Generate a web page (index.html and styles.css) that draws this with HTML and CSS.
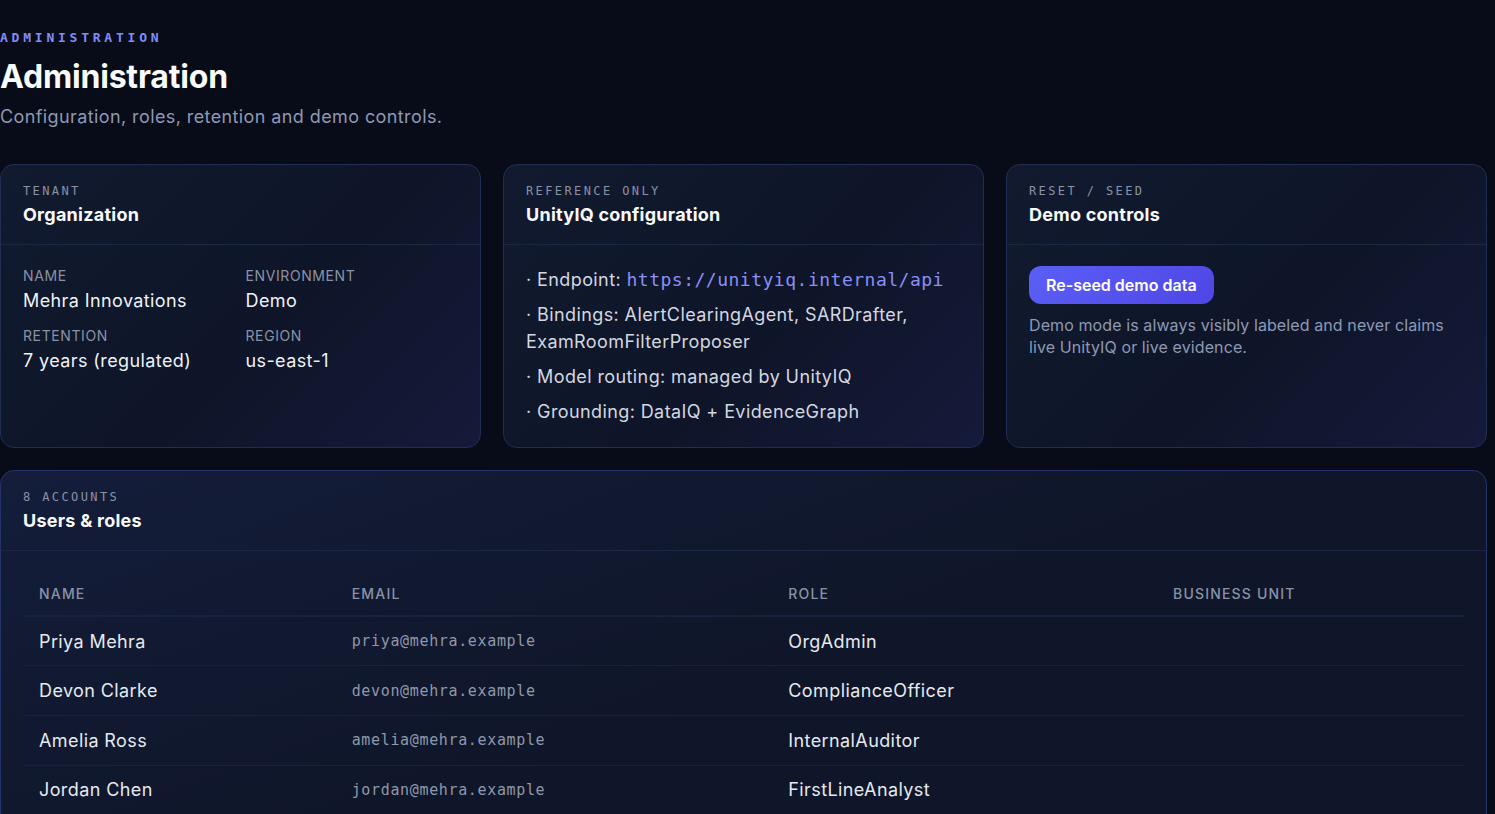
FILE: index.html
```html
<!DOCTYPE html>
<html lang="en">
<head>
<meta charset="utf-8">
<title>Administration</title>
<link rel="stylesheet" href="styles.css">
</head>
<body>
<main class="page">
  <header class="page-head">
    <div class="eyebrow">Administration</div>
    <h1 class="page-title">Administration</h1>
    <p class="page-sub">Configuration, roles, retention and demo controls.</p>
  </header>

  <section class="cards">
    <article class="card">
      <div class="card-head">
        <div class="card-eyebrow">Tenant</div>
        <h2 class="card-title">Organization</h2>
      </div>
      <div class="card-body">
        <dl class="facts">
          <div class="fact"><dt>Name</dt><dd>Mehra Innovations</dd></div>
          <div class="fact"><dt>Environment</dt><dd>Demo</dd></div>
          <div class="fact"><dt>Retention</dt><dd>7 years (regulated)</dd></div>
          <div class="fact"><dt>Region</dt><dd>us-east-1</dd></div>
        </dl>
      </div>
    </article>

    <article class="card">
      <div class="card-head">
        <div class="card-eyebrow">Reference only</div>
        <h2 class="card-title">UnityIQ configuration</h2>
      </div>
      <div class="card-body">
        <ul class="config">
          <li>· Endpoint: <code class="endpoint">https://unityiq.internal/api</code></li>
          <li>· Bindings: AlertClearingAgent, SARDrafter, ExamRoomFilterProposer</li>
          <li>· Model routing: managed by UnityIQ</li>
          <li>· Grounding: DataIQ + EvidenceGraph</li>
        </ul>
      </div>
    </article>

    <article class="card">
      <div class="card-head">
        <div class="card-eyebrow">Reset / Seed</div>
        <h2 class="card-title">Demo controls</h2>
      </div>
      <div class="card-body">
        <button class="btn-primary" type="button">Re-seed demo data</button>
        <p class="note">Demo mode is always visibly labeled and never claims live UnityIQ or live evidence.</p>
      </div>
    </article>
  </section>

  <section class="card card-wide">
    <div class="card-head">
      <div class="card-eyebrow">8 accounts</div>
      <h2 class="card-title">Users &amp; roles</h2>
    </div>
    <div class="card-body table-body">
      <table class="users">
        <colgroup>
          <col class="c-name"><col class="c-email"><col class="c-role"><col class="c-unit">
        </colgroup>
        <thead>
          <tr><th>Name</th><th>Email</th><th>Role</th><th>Business unit</th></tr>
        </thead>
        <tbody>
          <tr><td>Priya Mehra</td><td class="mono">priya@mehra.example</td><td>OrgAdmin</td><td></td></tr>
          <tr><td>Devon Clarke</td><td class="mono">devon@mehra.example</td><td>ComplianceOfficer</td><td></td></tr>
          <tr><td>Amelia Ross</td><td class="mono">amelia@mehra.example</td><td>InternalAuditor</td><td></td></tr>
          <tr><td>Jordan Chen</td><td class="mono">jordan@mehra.example</td><td>FirstLineAnalyst</td><td></td></tr>
          <tr><td>Samir Patel</td><td class="mono">samir@mehra.example</td><td>FirstLineAnalyst</td><td></td></tr>
          <tr><td>Lena Okafor</td><td class="mono">lena@mehra.example</td><td>SecondLineReviewer</td><td></td></tr>
          <tr><td>Marcus Hale</td><td class="mono">marcus@mehra.example</td><td>ModelRiskManager</td><td></td></tr>
          <tr><td>Nora Lindqvist</td><td class="mono">nora@mehra.example</td><td>Examiner</td><td></td></tr>
        </tbody>
      </table>
    </div>
  </section>
</main>
</body>
</html>
```

FILE: styles.css
```css
* { box-sizing: border-box; }

html, body {
  margin: 0;
  padding: 0;
  background: #080c18;
  color: #f1f5f9;
  font-family: "Inter", "Noto Sans", "Liberation Sans", sans-serif;
  letter-spacing: 0.025em;
}

.page {
  width: 1487px;
  padding: 29px 0 40px 0;
  display: flex;
  flex-direction: column;
  gap: 22px;
}

.page-head {
  display: flex;
  flex-direction: column;
  margin-bottom: 12px;
}

.eyebrow {
  font-family: "DejaVu Sans Mono", "Liberation Mono", monospace;
  font-size: 13px;
  line-height: 18px;
  letter-spacing: 0.29em;
  text-transform: uppercase;
  color: #818cf8;
  font-weight: 600;
}

.page-title {
  margin: 8px 0 0 0;
  font-size: 32px;
  line-height: 44px;
  font-weight: 700;
  letter-spacing: -0.006em;
  color: #f8fafc;
}

.page-sub {
  margin: 5px 0 0 0;
  font-size: 18px;
  line-height: 26px;
  color: #8e99b4;
}

.cards {
  display: grid;
  grid-template-columns: 1fr 1fr 1fr;
  gap: 22px;
}

.card {
  border: 1px solid #222d52;
  border-radius: 14px;
  background: linear-gradient(135deg, #111a2f 0%, #0e1528 55%, #151a3a 100%);
  min-height: 284px;
  display: flex;
  flex-direction: column;
}

.card-head {
  padding: 18px 22px 17px 22px;
  border-bottom: 1px solid #1b2644;
}

.card-eyebrow {
  font-family: "DejaVu Sans Mono", "Liberation Mono", monospace;
  font-size: 12px;
  line-height: 16px;
  letter-spacing: 0.2em;
  text-transform: uppercase;
  color: #8a92a6;
}

.card-title {
  margin: 4px 0 0 0;
  font-size: 18px;
  line-height: 24px;
  font-weight: 700;
  letter-spacing: 0.014em;
  color: #f8fafc;
}

.card-body {
  padding: 21px 22px 22px 22px;
}

.facts {
  margin: 0;
  display: grid;
  grid-template-columns: 1fr 1fr;
  column-gap: 10px;
  row-gap: 12px;
}

.fact dt {
  font-size: 14px;
  line-height: 20px;
  letter-spacing: 0.043em;
  text-transform: uppercase;
  color: #8a92a6;
}

.fact dd {
  margin: 2px 0 0 0;
  font-size: 18px;
  line-height: 26px;
  color: #eef2f7;
}

.config {
  list-style: none;
  margin: 0;
  padding: 0;
  display: flex;
  flex-direction: column;
  gap: 8px;
  font-size: 18px;
  line-height: 27px;
  color: #d3d7e0;
}

.endpoint {
  font-family: "DejaVu Sans Mono", "Liberation Mono", monospace;
  font-size: 18px;
  letter-spacing: 0.5px;
  color: #8b8ff7;
}

.btn-primary {
  font-family: inherit;
  font-size: 16px;
  font-weight: 600;
  letter-spacing: 0;
  color: #ffffff;
  background: linear-gradient(135deg, #5b5ff6 0%, #4f46e5 100%);
  border: none;
  border-radius: 12px;
  height: 38px;
  padding: 0 17px;
  cursor: pointer;
}

.note {
  margin: 10px 0 0 0;
  font-size: 16px;
  line-height: 22px;
  letter-spacing: 0.1px;
  color: #8e99b4;
}

.card-wide {
  min-height: 0;
  background: linear-gradient(160deg, #141d3a 0%, #0f1629 45%, #0f1629 100%);
  border-color: #26336a;
}

.table-body {
  padding: 22px 22px 0 22px;
}

.users {
  width: 100%;
  border-collapse: collapse;
  table-layout: fixed;
}

.c-name { width: 21.7%; }
.c-email { width: 30.3%; }
.c-role { width: 26.7%; }
.c-unit { width: 21.3%; }

.users th {
  text-align: left;
  font-size: 14px;
  font-weight: 500;
  letter-spacing: 0.085em;
  text-transform: uppercase;
  color: #8a92a6;
  padding: 11px 16px 11px 16px;
  line-height: 20px;
  border-bottom: 2px solid #18213d;
}

.users td {
  padding: 0 16px;
  height: 49.7px;
  font-size: 18px;
  color: #e5e9f0;
  border-bottom: 1px solid #18213d;
}

.users td.mono {
  font-family: "DejaVu Sans Mono", "Liberation Mono", monospace;
  font-size: 15px;
  letter-spacing: 0.65px;
  color: #8f97aa;
}
```
